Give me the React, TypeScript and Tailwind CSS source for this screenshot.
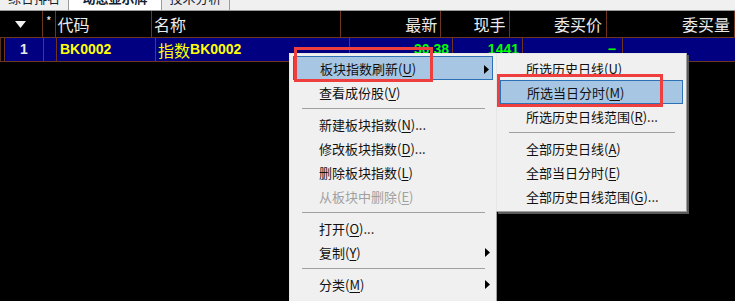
import React from "react";

const cjk = "font-['Noto_Sans_CJK_SC',sans-serif]";
const arial = "font-['Liberation_Sans',Arial,sans-serif]";

type Item =
  | { sep: true }
  | { sep?: false; label: string; key: string; tail?: string; active?: boolean; disabled?: boolean; sub?: boolean };

const mainItems: Item[] = [
  { label: "板块指数刷新", key: "U", active: true, sub: true },
  { label: "查看成份股", key: "V" },
  { sep: true },
  { label: "新建板块指数", key: "N", tail: "..." },
  { label: "修改板块指数", key: "D", tail: "..." },
  { label: "删除板块指数", key: "L" },
  { label: "从板块中删除", key: "E", disabled: true },
  { sep: true },
  { label: "打开", key: "O", tail: "..." },
  { label: "复制", key: "Y", sub: true },
  { sep: true },
  { label: "分类", key: "M", sub: true },
];

const subItems: Item[] = [
  { label: "所选历史日线", key: "U" },
  { label: "所选当日分时", key: "M", active: true },
  { label: "所选历史日线范围", key: "R", tail: "..." },
  { sep: true },
  { label: "全部历史日线", key: "A" },
  { label: "全部当日分时", key: "E" },
  { label: "全部历史日线范围", key: "G", tail: "..." },
];

function Arrow() {
  return (
    <svg width="5" height="9" viewBox="0 0 5 9" className="absolute right-[3px] top-[8px]">
      <path d="M0 0 L5 4.5 L0 9 Z" fill="#000" />
    </svg>
  );
}

function MenuList({ items }: { items: Item[] }) {
  return (
    <div className="pt-[2px] pb-[3px] px-[3px]">
      {items.map((it, i) =>
        it.sep ? (
          <div key={i} className="h-[8px] flex items-center ml-[9px] mr-[8px]">
            <div className="w-full h-px bg-[#a0a0a0]" />
          </div>
        ) : (
          <div
            key={i}
            className={`relative h-[24px] flex items-center pl-[26px] text-[13px] leading-none ${cjk} ${
              it.active ? "bg-[#a7c6e3] border border-[#2c70b5] pl-[25px]" : ""
            } ${it.disabled ? "text-[#a0a0a0]" : "text-[#111]"}`}
          >
            <span>
              {it.label}(<span className="underline underline-offset-2">{it.key}</span>){it.tail}
            </span>
            {it.sub && <Arrow />}
          </div>
        )
      )}
    </div>
  );
}

export default function App() {
  const line = "border-r border-[#6e3620]";
  return (
    <div className="relative w-[735px] h-[301px] overflow-hidden bg-black">
      {/* Tab strip, only the lower edge is on screen */}
      <div className={`relative h-[11px] bg-[#f0f0f0] border-b border-[#9a9a9a] flex overflow-hidden ${cjk}`}>
        <div className="w-[68px] h-full flex justify-end pr-[8px] text-[13px] text-[#123] leading-[13px]">
          <span className="-mt-[9px]">综合排名</span>
        </div>
        <div className="w-[94px] h-full bg-white border-l border-r border-[#9a9a9a] flex justify-center text-[13px] font-bold text-[#123] leading-[13px]">
          <span className="-mt-[9px]">动态显示牌</span>
        </div>
        <div className="w-[68px] h-full bg-[#ececec] border-r border-[#9a9a9a] flex justify-center text-[13px] text-[#123] leading-[13px]">
          <span className="-mt-[9px]">技术分析</span>
        </div>
      </div>

      {/* Header row */}
      <div className={`flex h-[26px] text-[16px] text-[#ececec] leading-none ${cjk}`}>
        <div className={`w-[44px] ${line} flex items-center justify-center`}>
          <svg width="11" height="7" viewBox="0 0 11 7">
            <path d="M0 0 H11 L5.5 7 Z" fill="#f0f0f0" />
          </svg>
        </div>
        <div className={`w-[13px] ${line} flex justify-center pt-[4px] text-[12px]`}>*</div>
        <div className={`w-[99px] ${line} flex items-center pl-[2px]`}>代码</div>
        <div className={`w-[194px] ${line} flex items-center pl-[2px]`}>名称</div>
        <div className={`w-[103px] ${line} flex items-center justify-end pr-[3px]`}>最新</div>
        <div className={`w-[70px] ${line} flex items-center justify-end pr-[3px]`}>现手</div>
        <div className={`w-[100px] ${line} flex items-center justify-end pr-[4px]`}>委买价</div>
        <div className={`w-[128px] shrink-0 ${line} flex items-center justify-end pr-[4px]`}>委买量</div>
      </div>

      {/* Data row */}
      <div className="flex h-[25px] border-y border-[#6e3620]">
        <div className="w-[4px] shrink-0 bg-black border-l border-[#5a3020]" />
        <div className={`w-[40px] shrink-0 bg-[#000080] border-l border-[#6e3620] ${line} flex items-center justify-center text-[14px] font-bold text-[#e8e8e8] ${arial}`}>
          1
        </div>
        <div className={`w-[13px] shrink-0 bg-[#000080] ${line}`} />
        <div className={`w-[99px] shrink-0 bg-[#000080] ${line} flex items-center pl-[3px] text-[14px] font-bold text-[#ffff00] ${arial}`}>
          BK0002
        </div>
        <div className={`w-[194px] shrink-0 bg-[#000080] ${line} flex items-center pl-[2px] text-[#ffff00]`}>
          <span className={`text-[16px] ${cjk}`}>指数</span>
          <span className={`text-[14px] font-bold ${arial}`}>BK0002</span>
        </div>
        <div className={`w-[103px] shrink-0 bg-[#000080] ${line} flex items-center justify-end pr-[3px] text-[14px] font-bold text-[#00ff00] ${arial}`}>
          30.38
        </div>
        <div className={`w-[70px] shrink-0 bg-[#000080] ${line} flex items-center justify-end pr-[3px] text-[14px] font-bold text-[#00ff00] ${arial}`}>
          1441
        </div>
        <div className={`w-[100px] shrink-0 bg-[#000080] ${line} flex items-center justify-end pr-[6px] text-[14px] font-bold text-[#00ff00] ${arial}`}>
          −
        </div>
        <div className={`w-[128px] shrink-0 bg-[#000080] ${line}`} />
      </div>

      {/* Context menu */}
      <div className="absolute left-[289px] top-[53px] w-[208px] h-[260px] bg-[#f0f0f0] border-l border-t border-[#e6e6e6] border-r border-r-[#a0a0a0]">
        <MenuList items={mainItems} />
      </div>

      {/* Sub menu */}
      <div className="absolute left-[496px] top-[53px] w-[191px] bg-[#f0f0f0] border border-[#a0a0a0] border-l-[#e6e6e6] border-t-[#e6e6e6] shadow-[2px_2px_0_#5a5a5a]">
        <MenuList items={subItems} />
      </div>

      {/* Annotation boxes */}
      <div className="absolute left-[294px] top-[47px] w-[139px] h-[35px] border-[3px] border-[#ef3e3e]" />
      <div className="absolute left-[497px] top-[74px] w-[166px] h-[33px] border-[3px] border-[#ef3e3e]" />
    </div>
  );
}
